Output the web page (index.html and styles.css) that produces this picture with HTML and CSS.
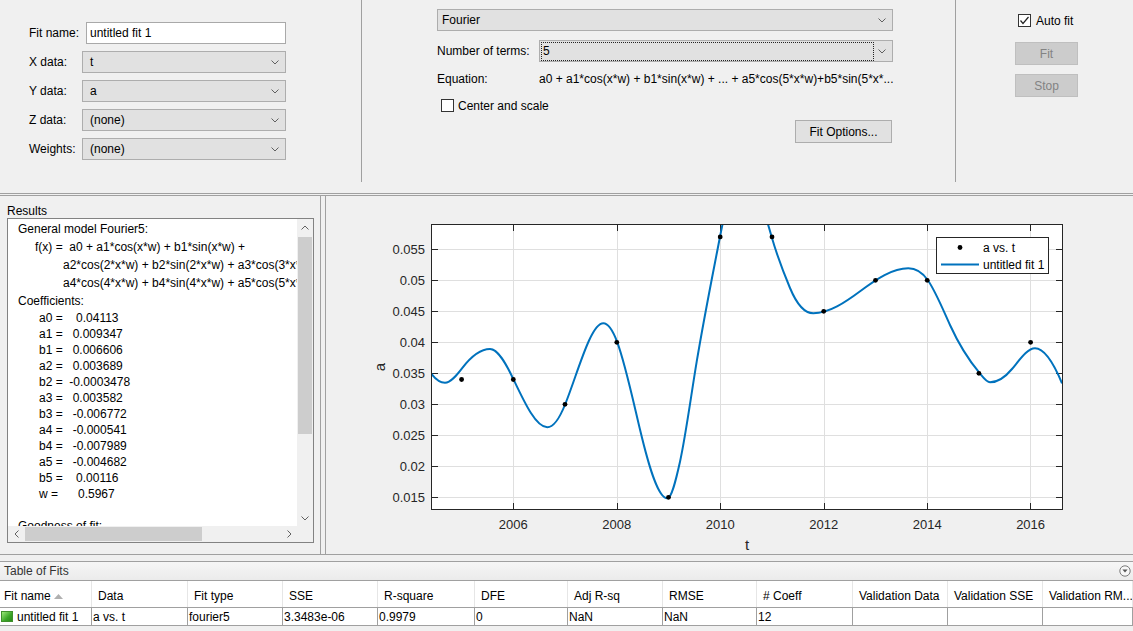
FILE: index.html
```html
<!DOCTYPE html>
<html lang="en">
<head>
<meta charset="utf-8">
<title>Curve Fitting Tool</title>
<link rel="stylesheet" href="styles.css">
</head>
<body>
<div class="app">
  <section class="top">
    <div class="data-col">
      <div class="form">
        <span class="lbl">Fit name:</span>
        <div class="textbox">untitled fit 1</div>
        <span class="lbl">X data:</span>
        <div class="combo left"><span>t</span><svg class="chev" width="8" height="5" viewBox="0 0 8 5"><polyline points="0.5,0.5 4,4 7.5,0.5"/></svg></div>
        <span class="lbl">Y data:</span>
        <div class="combo left"><span>a</span><svg class="chev" width="8" height="5" viewBox="0 0 8 5"><polyline points="0.5,0.5 4,4 7.5,0.5"/></svg></div>
        <span class="lbl">Z data:</span>
        <div class="combo left"><span>(none)</span><svg class="chev" width="8" height="5" viewBox="0 0 8 5"><polyline points="0.5,0.5 4,4 7.5,0.5"/></svg></div>
        <span class="lbl">Weights:</span>
        <div class="combo left"><span>(none)</span><svg class="chev" width="8" height="5" viewBox="0 0 8 5"><polyline points="0.5,0.5 4,4 7.5,0.5"/></svg></div>
      </div>
    </div>
    <div class="vsep"></div>
    <div class="model-col">
      <div class="combo fourier"><span>Fourier</span><svg class="chev" width="8" height="5" viewBox="0 0 8 5"><polyline points="0.5,0.5 4,4 7.5,0.5"/></svg></div>
      <div class="terms">
        <span class="w102">Number of terms:</span>
        <div class="combo termsbox"><span class="focusrect">5</span><svg class="chev" width="8" height="5" viewBox="0 0 8 5"><polyline points="0.5,0.5 4,4 7.5,0.5"/></svg></div>
      </div>
      <div class="eqrow">
        <span class="w102">Equation:</span>
        <span class="eqtext">a0 + a1*cos(x*w) + b1*sin(x*w) + ... + a5*cos(5*x*w)+b5*sin(5*x*...</span>
      </div>
      <div class="checkrow">
        <span class="cb"></span><span class="cblabel">Center and scale</span>
      </div>
      <div class="btnrow">
        <div class="btn opts">Fit Options...</div>
      </div>
    </div>
    <div class="vsep"></div>
    <div class="fit-col">
      <div class="autorow">
        <span class="cb checked"><svg width="11" height="11" viewBox="0 0 11 11"><polyline points="1.5,5.5 4,8.5 9.5,2"/></svg></span><span class="autolabel">Auto fit</span>
      </div>
      <div class="btn disabled fitbtn">Fit</div>
      <div class="btn disabled stopbtn">Stop</div>
    </div>
  </section>

  <section class="mid">
    <div class="results">
      <div class="res-title">Results</div>
      <div class="res-box">
        <div class="res-content">
          <div class="eqlines">
            <div>General model Fourier5:</div>
            <div class="ind1">f(x) =  a0 + a1*cos(x*w) + b1*sin(x*w) + </div>
            <div class="ind2">a2*cos(2*x*w) + b2*sin(2*x*w) + a3*cos(3*x*w) + b3*sin(3*x*w) + </div>
            <div class="ind2">a4*cos(4*x*w) + b4*sin(4*x*w) + a5*cos(5*x*w) + b5*sin(5*x*w)</div>
            <div>Coefficients:</div>
          </div>
          <div class="coefs">
            <div>a0 =    0.04113</div>
            <div>a1 =   0.009347</div>
            <div>b1 =   0.006606</div>
            <div>a2 =   0.003689</div>
            <div>b2 =  -0.0003478</div>
            <div>a3 =   0.003582</div>
            <div>b3 =   -0.006772</div>
            <div>a4 =   -0.000541</div>
            <div>b4 =   -0.007989</div>
            <div>a5 =   -0.004682</div>
            <div>b5 =    0.00116</div>
            <div>w =      0.5967</div>
          </div>
          <div class="gof">
            <div>&nbsp;</div>
            <div class="gofhead">Goodness of fit:</div>
          </div>
        </div>
        <div class="vscroll">
          <div class="sbtn"><svg width="8" height="5" viewBox="0 0 8 5"><polyline points="0.5,4.5 4,1 7.5,4.5"/></svg></div>
          <div class="vthumb"></div>
          <div class="sbtn down"><svg width="8" height="5" viewBox="0 0 8 5"><polyline points="0.5,0.5 4,4 7.5,0.5"/></svg></div>
        </div>
        <div class="hscroll">
          <div class="sbtn"><svg width="5" height="8" viewBox="0 0 5 8"><polyline points="4.5,0.5 1,4 4.5,7.5"/></svg></div>
          <div class="hthumb"></div>
          <div class="sbtn right"><svg width="5" height="8" viewBox="0 0 5 8"><polyline points="0.5,0.5 4,4 0.5,7.5"/></svg></div>
        </div>
        <div class="corner"></div>
      </div>
    </div>
    <div class="splitter"></div>
    <div class="plot">
      <svg class="chart" width="807" height="358" viewBox="326 196 807 358">
        <defs>
          <clipPath id="axclip"><rect x="431" y="224" width="632" height="286"/></clipPath>
        </defs>
        <rect x="431.5" y="224.5" width="631" height="285" fill="#ffffff"/>
        <g class="grid">
          <path d="M513.5 225V509M617.5 225V509M720.5 225V509M824.5 225V509M927.5 225V509M1030.5 225V509"/>
          <path d="M432 249.5H1062M432 280.5H1062M432 311.5H1062M432 342.5H1062M432 373.5H1062M432 404.5H1062M432 435.5H1062M432 466.5H1062M432 497.5H1062"/>
        </g>
        <g class="ticks">
          <path d="M432 249.5h6M432 280.5h6M432 311.5h6M432 342.5h6M432 373.5h6M432 404.5h6M432 435.5h6M432 466.5h6M432 497.5h6"/>
          <path d="M1062 249.5h-6M1062 280.5h-6M1062 311.5h-6M1062 342.5h-6M1062 373.5h-6M1062 404.5h-6M1062 435.5h-6M1062 466.5h-6M1062 497.5h-6"/>
          <path d="M513.5 509v-6M617.5 509v-6M720.5 509v-6M824.5 509v-6M927.5 509v-6M1030.5 509v-6"/>
          <path d="M513.5 225v6M617.5 225v6M720.5 225v6M824.5 225v6M927.5 225v6M1030.5 225v6"/>
        </g>
        <g clip-path="url(#axclip)">
          <path class="curve" d="M431 373.3 C435.67 379.37 440.33 382.7 445 382.7 C450.67 382.7 456.33 375.67 462 368.3 C471.33 356.17 480.67 349 490 349 C497.77 349 505.53 362.69 513.3 379 C524.63 402.8 535.97 427.3 547.3 427.3 C553.3 427.3 559.3 419 565.3 404 C577.97 372.33 590.63 323.3 603.3 323.3 C607.97 323.3 612.63 329.89 617.3 342.3 C624.87 362.43 632.43 397.72 640 429.5 C649.1 467.72 658.2 498.3 667.3 498.3 C671.53 498.3 675.77 480.75 680 461.7 C685.57 436.65 691.13 395.1 696.7 361.7 C704.47 315.1 712.23 277.09 720 236.7 C728 195.1 736 175 744 175 C753.23 175 762.47 204.68 771.7 237 C777.8 258.35 783.9 273.36 790 288 C797.77 306.64 805.53 313.3 813.3 313.3 C829.13 313.3 844.97 302.58 860.8 290.8 C876.63 279.02 892.47 268.3 908.3 268.3 C914.77 268.3 921.23 270.95 927.7 280 C935.13 290.41 942.57 308.65 950 325 C959.77 346.49 969.53 360.98 979.3 372.7 C982.87 376.98 986.43 382.3 990 382.3 C997.33 382.3 1004.67 377.8 1012 369 C1019.67 359.8 1027.33 348.3 1035 348.3 C1044 348.3 1053 361.7 1062 383.3"/>
          <g class="dots">
            <circle cx="461.6" cy="379.5" r="2.4"/>
            <circle cx="513.3" cy="379.5" r="2.4"/>
            <circle cx="565.0" cy="404.3" r="2.4"/>
            <circle cx="616.8" cy="342.3" r="2.4"/>
            <circle cx="668.5" cy="497.3" r="2.4"/>
            <circle cx="720.2" cy="236.9" r="2.4"/>
            <circle cx="772.0" cy="236.9" r="2.4"/>
            <circle cx="823.7" cy="311.3" r="2.4"/>
            <circle cx="875.5" cy="280.3" r="2.4"/>
            <circle cx="927.2" cy="280.3" r="2.4"/>
            <circle cx="978.9" cy="373.3" r="2.4"/>
            <circle cx="1030.6" cy="342.3" r="2.4"/>
          </g>
        </g>
        <rect class="axbox" x="431.5" y="224.5" width="631" height="285"/>
        <g class="ylab">
          <text x="425" y="253.9">0.055</text>
          <text x="425" y="284.9">0.05</text>
          <text x="425" y="315.9">0.045</text>
          <text x="425" y="346.9">0.04</text>
          <text x="425" y="377.9">0.035</text>
          <text x="425" y="408.9">0.03</text>
          <text x="425" y="439.9">0.025</text>
          <text x="425" y="470.9">0.02</text>
          <text x="425" y="501.9">0.015</text>
        </g>
        <g class="xlab">
          <text x="513.3" y="528.7">2006</text>
          <text x="616.8" y="528.7">2008</text>
          <text x="720.2" y="528.7">2010</text>
          <text x="823.7" y="528.7">2012</text>
          <text x="927.2" y="528.7">2014</text>
          <text x="1030.6" y="528.7">2016</text>
        </g>
        <text class="axtitle" transform="translate(385 367) rotate(-90)">a</text>
        <text class="axtitle" x="747" y="550">t</text>
        <g class="legend">
          <rect x="936.5" y="237.5" width="112" height="36"/>
          <circle cx="960" cy="247.5" r="2.4" class="ldot"/>
          <path d="M941 264.5H979" class="lline"/>
          <text x="983" y="252">a vs. t</text>
          <text x="983" y="269">untitled fit 1</text>
        </g>
      </svg>
    </div>
  </section>

  <section class="fits">
    <div class="fits-title">
      <span>Table of Fits</span>
      <svg class="collapse" width="12" height="12" viewBox="0 0 12 12"><circle cx="6" cy="6" r="5.2"/><polygon points="3.4,4.6 8.6,4.6 6,7.6"/></svg>
    </div>
    <div class="tgrid thead">
      <div class="th first">Fit name<svg class="sort" width="9" height="5" viewBox="0 0 9 5"><polygon points="0,5 9,5 4.5,0"/></svg></div>
      <div class="th">Data</div>
      <div class="th">Fit type</div>
      <div class="th">SSE</div>
      <div class="th">R-square</div>
      <div class="th">DFE</div>
      <div class="th">Adj R-sq</div>
      <div class="th">RMSE</div>
      <div class="th"># Coeff</div>
      <div class="th">Validation Data</div>
      <div class="th">Validation SSE</div>
      <div class="th">Validation RM...</div>
    </div>
    <div class="tgrid trow">
      <div class="td first"><span class="swatch"></span><span>untitled fit 1</span></div>
      <div class="td">a vs. t</div>
      <div class="td">fourier5</div>
      <div class="td">3.3483e-06</div>
      <div class="td">0.9979</div>
      <div class="td">0</div>
      <div class="td">NaN</div>
      <div class="td">NaN</div>
      <div class="td">12</div>
      <div class="td"></div>
      <div class="td"></div>
      <div class="td"></div>
    </div>
  </section>
</div>
</body>
</html>
```

FILE: styles.css
```css
* { box-sizing: border-box; margin: 0; padding: 0; }
html, body { width: 1133px; height: 631px; overflow: hidden; }
body {
  background: #f0f0f0;
  font-family: "Liberation Sans", Arial, sans-serif;
  font-size: 12px;
  color: #000;
}
.app { display: flex; flex-direction: column; height: 631px; }

/* ---------- top panel ---------- */
.top { display: flex; height: 194px; border-bottom: 1px solid #a0a0a0; }
.vsep { width: 1px; height: 182px; background: #a0a0a0; flex: none; }
.data-col { width: 361px; flex: none; padding: 22px 0 0 29px; }
.form {
  display: grid;
  grid-template-columns: 53px 204px;
  grid-auto-rows: 22px;
  row-gap: 7px;
  align-items: center;
}
.lbl { white-space: nowrap; }
.textbox {
  margin-left: 4px; width: 200px; height: 22px;
  background: #fff; border: 1px solid #a9a9a9;
  padding-left: 3px; display: flex; align-items: center;
}
.combo {
  display: flex; align-items: center; height: 22px;
  background: #e1e1e1; border: 1px solid #adadad;
}
.combo.left { padding-left: 7px; }
.chev { margin-left: auto; margin-right: 6px; flex: none; }
.chev polyline { fill: none; stroke: #606060; stroke-width: 1; }

.model-col { width: 593px; flex: none; padding: 9px 0 0 75px; }
.combo.fourier { width: 456px; padding-left: 4px; }
.terms { display: flex; align-items: center; margin-top: 9px; width: 456px; }
.w102 { width: 102px; flex: none; white-space: nowrap; }
.combo.termsbox { width: 354px; padding-left: 1px; }
.focusrect {
  width: 333px; height: 19px; border: 1px dotted #222;
  padding-left: 1px; display: flex; align-items: center;
}
.eqrow { display: flex; align-items: center; height: 18px; margin-top: 8px; width: 456px; }
.eqtext { white-space: nowrap; overflow: hidden; width: 354px; }
.checkrow { display: flex; align-items: center; height: 13px; margin-top: 11px; }
.cb {
  width: 13px; height: 13px; border: 1px solid #333; background: #fff;
  flex: none; display: flex; align-items: center; justify-content: center;
}
.checkrow .cb { margin-left: 4px; }
.cblabel { margin-left: 4px; }
.cb.checked svg polyline { fill: none; stroke: #222; stroke-width: 1.2; }
.btnrow { display: flex; justify-content: flex-end; width: 455px; margin-top: 8px; }
.btn {
  height: 23px; display: flex; align-items: center; justify-content: center;
  background: #e1e1e1; border: 1px solid #adadad;
}
.btn.opts { width: 97px; }
.btn.disabled { background: #cccccc; border-color: #bfbfbf; color: #838383; width: 63px; }

.fit-col { flex: 1; padding: 14px 0 0 59px; }
.autorow { display: flex; align-items: center; height: 13px; margin-left: 3px; }
.autolabel { margin-left: 5px; }
.fitbtn { margin-top: 15px; }
.stopbtn { margin-top: 9px; }

/* ---------- middle ---------- */
.mid {
  display: flex; height: 360px; margin-top: 1px;
  border-top: 1px solid #a0a0a0; border-bottom: 1px solid #a0a0a0;
}
.results { width: 321px; flex: none; border-right: 1px solid #a0a0a0; padding: 8px 0 0 7px; }
.res-title { height: 14px; line-height: 14px; }
.res-box {
  width: 307px; height: 325px; background: #fff; border: 1px solid #828282;
  display: grid; grid-template-columns: 289px 16px; grid-template-rows: 307px 16px;
}
.res-content { overflow: hidden; padding: 1px 0 0 10px; }
.eqlines div { height: 18px; line-height: 18px; white-space: pre; }
.ind1 { padding-left: 17px; }
.ind2 { padding-left: 45px; }
.coefs div, .gof div { height: 16px; line-height: 16px; padding-left: 21px; white-space: pre; }
.gof .gofhead { padding-left: 0; }
.vscroll { background: #f0f0f0; display: flex; flex-direction: column; }
.hscroll { background: #f0f0f0; display: flex; }
.corner { background: #f0f0f0; }
.sbtn { width: 16px; height: 16px; display: flex; align-items: center; justify-content: center; flex: none; }
.sbtn polyline { fill: none; stroke: #606060; stroke-width: 1; }
.vscroll .sbtn.down { margin-top: auto; }
.hscroll .sbtn.right { margin-left: auto; }
.vthumb { margin: 2px 1px 0 1px; width: 14px; height: 197px; background: #cdcdcd; }
.hthumb { margin: 1px 0 1px 1px; width: 177px; height: 14px; background: #cdcdcd; }
.splitter { width: 4px; flex: none; }
.plot { flex: 1; border-left: 1px solid #a0a0a0; }
.chart { display: block; font-family: "Liberation Sans", Arial, sans-serif; }
.grid path { stroke: #dfdfdf; stroke-width: 1; fill: none; }
.ticks path { stroke: #262626; stroke-width: 1; fill: none; }
.axbox { fill: none; stroke: #262626; stroke-width: 1; }
.curve { fill: none; stroke: #0072bd; stroke-width: 2; stroke-linejoin: round; }
.dots circle { fill: #000; }
.ylab text { font-size: 13px; fill: #262626; text-anchor: end; }
.xlab text { font-size: 13px; fill: #262626; text-anchor: middle; }
.axtitle { font-size: 15px; fill: #262626; text-anchor: middle; }
.legend rect { fill: #fff; stroke: #262626; stroke-width: 1; }
.legend text { font-size: 12px; fill: #000; }
.ldot { fill: #000; }
.lline { stroke: #0072bd; stroke-width: 2; fill: none; }

/* ---------- table of fits ---------- */
.fits { margin-top: 6px; border-top: 1px solid #a0a0a0; }
.fits-title {
  height: 19px; border-bottom: 1px solid #a0a0a0;
  background: linear-gradient(#f6f6f6, #ebebeb);
  display: flex; align-items: center; padding-left: 4px; color: #333;
}
.collapse { margin-left: auto; margin-right: 2px; }
.collapse circle { fill: #f7f7f7; stroke: #7a7a7a; stroke-width: 1; }
.collapse polygon { fill: #555; }
.tgrid {
  display: grid;
  grid-template-columns: 92px 96px 95px 95px 97px 93px 95px 94px 96px 95px 95px 90px;
  background: #fff;
}
.thead { height: 27px; border-bottom: 1px solid #a0a0a0; }
.th {
  display: flex; align-items: center; padding: 4px 0 0 6px;
  border-right: 1px solid #e6e6e6; white-space: nowrap; overflow: hidden;
}
.th.first { padding-left: 4px; }
.sort { margin-left: 3px; }
.sort polygon { fill: #b0b0b0; }
.trow { height: 18px; border-bottom: 1px solid #a0a0a0; }
.td {
  display: flex; align-items: center; padding-left: 1px;
  border-right: 1px solid #a0a0a0; white-space: nowrap; overflow: hidden;
}
.swatch {
  width: 12px; height: 11px; margin: 0 4px 0 0;
  border: 1px solid #3f8f2c;
  background: linear-gradient(135deg, #9be87a, #3aa526 60%, #2a8a1c);
  flex: none;
}
```
